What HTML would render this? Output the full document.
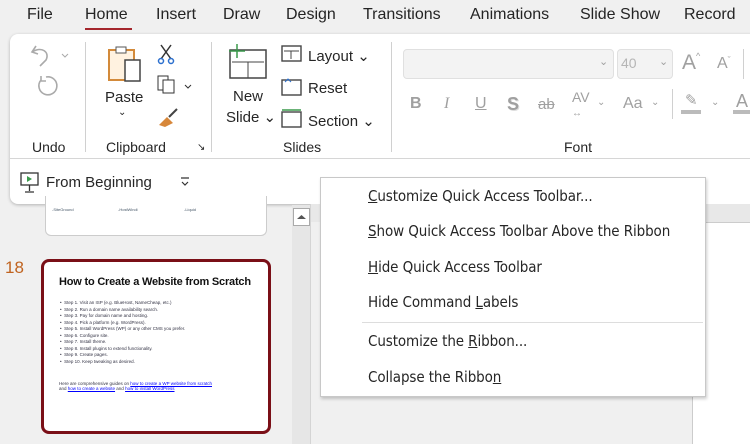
<!DOCTYPE html>
<html><head><style>
*{margin:0;padding:0;box-sizing:border-box}
body{width:750px;height:444px;overflow:hidden;background:#f0f0f0;font-family:"Liberation Sans",sans-serif;color:#262626;position:relative}
.a{position:absolute;white-space:nowrap}
.tab{top:6px;font-size:16px;color:#242424}
.u{text-decoration:underline}
.mi{position:absolute;left:368px;font-size:15px;color:#262626;font-family:"DejaVu Sans Condensed","Liberation Sans",sans-serif;letter-spacing:-0.1px}
.gl{font-size:14px;color:#262626;top:139px}
.btn{font-size:15px;color:#262626}
.gray{color:#a0a0a0}
</style></head><body>
<div class="a tab" style="left:27px">File</div>
<div class="a tab" style="left:85px">Home</div>
<div class="a" style="left:85px;top:28px;width:47px;height:2px;background:#a4262c"></div>
<div class="a tab" style="left:156px">Insert</div>
<div class="a tab" style="left:223px">Draw</div>
<div class="a tab" style="left:286px">Design</div>
<div class="a tab" style="left:363px">Transitions</div>
<div class="a tab" style="left:470px">Animations</div>
<div class="a tab" style="left:580px">Slide Show</div>
<div class="a tab" style="left:684px">Record</div>

<div class="a" style="left:10px;top:34px;width:760px;height:170px;background:#fff;border-radius:8px;box-shadow:0 1px 3px rgba(0,0,0,.25)"></div>
<div class="a" style="left:10px;top:158px;width:740px;height:1px;background:#d6d6d6"></div>
<div class="a" style="left:85px;top:42px;width:1px;height:110px;background:#d0d0d0"></div>
<div class="a" style="left:211px;top:42px;width:1px;height:110px;background:#d0d0d0"></div>
<div class="a" style="left:391px;top:42px;width:1px;height:110px;background:#d0d0d0"></div>
<svg class="a" style="left:28px;top:42px" width="44" height="60"><path d="M8 4 L4 10 L10 12 M4 10 C14 4 22 10 18 18 L12 24" fill="none" stroke="#aaa" stroke-width="1.6"/><path d="M34 12 l3 3 l3 -3" fill="none" stroke="#aaa"/><path d="M13 38 A9 9 0 1 0 18 35 M13 34 l0 5 l5 0" fill="none" stroke="#aaa" stroke-width="1.6"/></svg>
<div class="a gl" style="left:32px">Undo</div>
<svg class="a" style="left:105px;top:44px" width="40" height="40"><rect x="4" y="6" width="25" height="30" fill="#fff2e0" stroke="#d38a3a" stroke-width="2"/><rect x="11" y="3" width="10" height="6" fill="#fff" stroke="#555"/><rect x="20" y="16" width="15" height="21" fill="#fff" stroke="#444" stroke-width="1.5"/></svg>
<div class="a btn" style="left:105px;top:89px">Paste</div>
<div class="a" style="left:118px;top:107px;font-size:10px">⌄</div>
<svg class="a" style="left:155px;top:43px" width="40" height="90"><path d="M6 2 L16 16 M16 2 L6 16" stroke="#333" stroke-width="1.5"/><circle cx="6" cy="18" r="2.5" fill="none" stroke="#2b6fce" stroke-width="1.5"/><circle cx="16" cy="18" r="2.5" fill="none" stroke="#2b6fce" stroke-width="1.5"/><rect x="3" y="33" width="10" height="14" fill="#fff" stroke="#333"/><rect x="8" y="37" width="11" height="13" fill="#fff" stroke="#333"/><path d="M30 42 l3 3 l3 -3" fill="none" stroke="#333"/><path d="M4 82 l8 -8 l6 6 l-8 4z" fill="#d7873a"/><path d="M14 74 l8 -8" stroke="#444" stroke-width="2"/></svg>
<div class="a gl" style="left:106px">Clipboard</div>
<div class="a" style="left:197px;top:142px;font-size:10px">↘</div>
<svg class="a" style="left:226px;top:42px" width="44" height="40"><rect x="4" y="8" width="36" height="28" fill="#fff" stroke="#444" stroke-width="1.5"/><path d="M6 20 H38 M22 20 V36" stroke="#444"/><path d="M11 2 V16 M3 9 H19" stroke="#3a9a4c" stroke-width="1.5"/></svg>
<div class="a btn" style="left:233px;top:88px">New</div>
<div class="a btn" style="left:226px;top:108px">Slide ⌄</div>
<svg class="a" style="left:281px;top:44px" width="22" height="88"><rect x="1" y="2" width="19" height="15" fill="#fff" stroke="#444" stroke-width="1.4"/><path d="M3 7 H18 M10 7 V15" stroke="#444"/><rect x="1" y="36" width="19" height="15" fill="#fff" stroke="#444" stroke-width="1.4"/><path d="M4 38 l3 -3 l3 3" stroke="#2b6fce" fill="none"/><rect x="1" y="68" width="19" height="15" fill="#fff" stroke="#444" stroke-width="1.4"/><path d="M1 66 H20" stroke="#3a9a4c" stroke-width="1.5"/></svg>
<div class="a btn" style="left:308px;top:47px">Layout ⌄</div>
<div class="a btn" style="left:308px;top:80px">Reset</div>
<div class="a btn" style="left:308px;top:112px">Section ⌄</div>
<div class="a gl" style="left:283px">Slides</div>
<div class="a" style="left:403px;top:49px;width:211px;height:30px;background:#f3f3f3;border:1px solid #e0e0e0;border-radius:4px"></div>
<div class="a gray" style="left:599px;top:55px;font-size:11px">⌄</div>
<div class="a" style="left:617px;top:49px;width:56px;height:30px;background:#f3f3f3;border:1px solid #e0e0e0;border-radius:4px"></div>
<div class="a gray" style="left:621px;top:55px;font-size:14px;color:#b5b5b5">40</div>
<div class="a gray" style="left:659px;top:55px;font-size:11px">⌄</div>
<div class="a gray" style="left:682px;top:51px;font-size:21px">A<span style="font-size:9px;vertical-align:top">^</span></div>
<div class="a gray" style="left:717px;top:55px;font-size:16px">A<span style="font-size:9px;vertical-align:top">ˇ</span></div>
<div class="a" style="left:743px;top:49px;width:1px;height:30px;background:#d0d0d0"></div>
<div class="a gray" style="left:410px;top:95px;font-size:16px;font-weight:bold">B</div>
<div class="a gray" style="left:444px;top:95px;font-size:16px;font-style:italic;font-family:'Liberation Serif',serif">I</div>
<div class="a gray u" style="left:475px;top:95px;font-size:16px">U</div>
<div class="a gray" style="left:507px;top:94px;font-size:18px;font-weight:bold;text-shadow:1px 1px #ddd">S</div>
<div class="a gray" style="left:538px;top:96px;font-size:15px;text-decoration:line-through">ab</div>
<div class="a gray" style="left:572px;top:90px;font-size:14px;line-height:14px">AV<br><span style="font-size:10px">↔</span></div>
<div class="a gray" style="left:597px;top:97px;font-size:10px">⌄</div>
<div class="a gray" style="left:623px;top:95px;font-size:16px">Aa</div>
<div class="a gray" style="left:651px;top:97px;font-size:10px">⌄</div>
<div class="a" style="left:672px;top:89px;width:1px;height:30px;background:#d0d0d0"></div>
<div class="a" style="left:681px;top:110px;width:20px;height:4px;background:#bbb"></div>
<div class="a gray" style="left:685px;top:91px;font-size:15px">✎</div>
<div class="a gray" style="left:711px;top:97px;font-size:10px">⌄</div>
<div class="a gray" style="left:736px;top:91px;font-size:18px">A</div>
<div class="a" style="left:733px;top:110px;width:20px;height:4px;background:#bbb"></div>
<div class="a gl" style="left:564px">Font</div>
<svg class="a" style="left:20px;top:172px" width="20" height="22"><rect x="1" y="1" width="17" height="12" fill="#fff" stroke="#333" stroke-width="1.3"/><path d="M7 4 L12 7 L7 10z" fill="#3a9a4c"/><path d="M9.5 13 V19 M5 20 H14" stroke="#333" stroke-width="1.3"/></svg>
<div class="a btn" style="left:46px;top:174px">From Beginning</div>
<svg class="a" style="left:180px;top:177px" width="10" height="10"><path d="M1 1 H9 M2 5 L5 8 L8 5" fill="none" stroke="#333" stroke-width="1.2"/></svg>
<div class="a" style="left:45px;top:196px;width:222px;height:40px;background:#fff;border:1px solid #ccc;border-top:none;border-radius:0 0 6px 6px"></div>
<div class="a" style="left:52px;top:207px;font-size:4px;color:#456">-SiteGround</div>
<div class="a" style="left:118px;top:207px;font-size:4px;color:#456">-HostWindi</div>
<div class="a" style="left:184px;top:207px;font-size:4px;color:#456">-Liquid</div>
<div class="a" style="left:5px;top:258px;font-size:17px;color:#c0631f">18</div>
<div class="a" style="left:41px;top:259px;width:230px;height:175px;background:#fff;border:3px solid #7a0f17;border-radius:8px"></div>
<div class="a" style="left:59px;top:276px;font-size:11px;font-weight:bold;color:#111;letter-spacing:-0.2px">How to Create a Website from Scratch</div>
<div class="a" style="left:60px;top:300px;font-size:4.5px;line-height:6.5px;color:#334">
• &nbsp;Step 1. Visit an ISP (e.g. BlueHost, NameCheap, etc.)<br>• &nbsp;Step 2. Run a domain name availability search.<br>• &nbsp;Step 3. Pay for domain name and hosting.<br>• &nbsp;Step 4. Pick a platform (e.g. WordPress).<br>• &nbsp;Step 5. Install WordPress (WP) or any other CMS you prefer.<br>• &nbsp;Step 6. Configure site.<br>• &nbsp;Step 7. Install theme.<br>• &nbsp;Step 8. Install plugins to extend functionality.<br>• &nbsp;Step 9. Create pages.<br>• &nbsp;Step 10. Keep tweaking as desired.</div>
<div class="a" style="left:59px;top:381px;font-size:4.5px;line-height:5px;color:#334">Here are comprehensive guides on <span style="color:#00f;text-decoration:underline">how to create a WP website from scratch</span><br>and <span style="color:#00f;text-decoration:underline">how to create a website</span> and <span style="color:#00f;text-decoration:underline">how to install WordPress</span></div>
<div class="a" style="left:292px;top:205px;width:18px;height:239px;background:#e6e6e6"></div>
<div class="a" style="left:293px;top:208px;width:17px;height:18px;background:#fff;border:1px solid #aaa"></div>
<svg class="a" style="left:296px;top:214px" width="11" height="6"><path d="M1 5 L5.5 1 L10 5z" fill="#555"/></svg>
<div class="a" style="left:310px;top:204px;width:1px;height:240px;background:#d4d4d4"></div>
<div class="a" style="left:311px;top:204px;width:439px;height:18px;background:#e8e8e8"></div>
<div class="a" style="left:692px;top:222px;width:58px;height:222px;background:#fff;border-left:1px solid #ccc;border-top:1px solid #ccc"></div>
<div class="a" style="left:320px;top:177px;width:386px;height:220px;background:#fff;border:1px solid #c8c8c8;box-shadow:1px 2px 3px rgba(0,0,0,.2)"></div>
<div class="mi" style="top:187px"><span class="u">C</span>ustomize Quick Access Toolbar...</div>
<div class="mi" style="top:222px"><span class="u">S</span>how Quick Access Toolbar Above the Ribbon</div>
<div class="mi" style="top:258px"><span class="u">H</span>ide Quick Access Toolbar</div>
<div class="mi" style="top:293px">Hide Command <span class="u">L</span>abels</div>
<div class="a" style="left:362px;top:322px;width:341px;height:1px;background:#ddd"></div>
<div class="mi" style="top:332px">Customize the <span class="u">R</span>ibbon...</div>
<div class="mi" style="top:368px">Collapse the Ribbo<span class="u">n</span></div>
</body></html>
